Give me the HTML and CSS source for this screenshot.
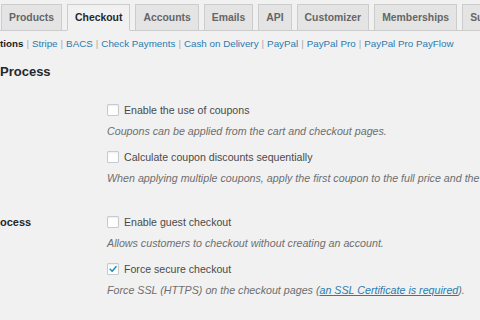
FILE: index.html
```html
<!DOCTYPE html>
<html>
<head>
<meta charset="utf-8">
<link rel="stylesheet" href="styles.css">
</head>
<body>
<div class="wrap">
  <nav class="tabs">
    <a class="tab">Products</a>
    <a class="tab active">Checkout</a>
    <a class="tab">Accounts</a>
    <a class="tab">Emails</a>
    <a class="tab">API</a>
    <a class="tab">Customizer</a>
    <a class="tab">Memberships</a>
    <a class="tab">Subscriptions</a>
  </nav>
  <ul class="subnav">
    <li class="current">tions</li>
    <li><a>Stripe</a></li>
    <li><a>BACS</a></li>
    <li><a>Check Payments</a></li>
    <li><a>Cash on Delivery</a></li>
    <li><a>PayPal</a></li>
    <li><a>PayPal Pro</a></li>
    <li><a>PayPal Pro PayFlow</a></li>
  </ul>
  <h2 class="title">Process</h2>
  <div class="form">
    <div class="row">
      <div class="th"></div>
      <div class="td">
        <label class="opt"><span class="cb"></span>Enable the use of coupons</label>
        <p class="desc">Coupons can be applied from the cart and checkout pages.</p>
        <label class="opt gap"><span class="cb"></span>Calculate coupon discounts sequentially</label>
        <p class="desc">When applying multiple coupons, apply the first coupon to the full price and the second coupon to the discounted price and so on.</p>
      </div>
    </div>
    <div class="row row2">
      <div class="th">ocess</div>
      <div class="td">
        <label class="opt"><span class="cb"></span>Enable guest checkout</label>
        <p class="desc">Allows customers to checkout without creating an account.</p>
        <label class="opt gap"><span class="cb checked"><svg viewBox="0 0 12 12" width="12" height="12"><path d="M2.6 6.2 L5 8.6 L9.6 3.2" fill="none" stroke="#1e8cbe" stroke-width="1.8" stroke-linecap="round" stroke-linejoin="round"/></svg></span>Force secure checkout</label>
        <p class="desc">Force SSL (HTTPS) on the checkout pages (<a class="link">an SSL Certificate is required</a>).</p>
      </div>
    </div>
  </div>
</div>
</body>
</html>
```

FILE: styles.css
```css
html, body {
  margin: 0;
  padding: 0;
  background: #f1f1f1;
  overflow: hidden;
}
body {
  width: 480px;
  height: 320px;
  font-family: "Liberation Sans", Arial, sans-serif;
  color: #444;
}
.wrap {
  width: 480px;
  overflow: hidden;
}
.tabs {
  display: flex;
  gap: 5px;
  padding: 4px 0 0 1px;
  border-bottom: 1px solid #ccc;
  white-space: nowrap;
}
.tab {
  flex: none;
  display: block;
  padding: 5px 7px 5px;
  font-size: 10.4px;
  line-height: 15px;
  font-weight: bold;
  color: #666;
  background: #e4e4e4;
  border: 1px solid #ccc;
  border-bottom: none;
}
.tab.active {
  background: #f1f1f1;
  color: #23282d;
  margin-bottom: -1px;
  border-bottom: 1px solid #f1f1f1;
}
.subnav {
  list-style: none;
  margin: 5px 0 0;
  padding: 0;
  display: flex;
  white-space: nowrap;
  font-size: 9.8px;
  line-height: 16px;
  color: #999;
}
.subnav li + li::before {
  content: "|";
  padding: 0 3px;
  color: #aaa;
}
.subnav .current {
  font-weight: bold;
  color: #1d1d1d;
}
.subnav a {
  color: #2a7bb0;
}
.title {
  margin: 11px 0 0;
  font-size: 13px;
  line-height: 18px;
  color: #23282d;
}
.form {
  margin-top: 19px;
}
.row {
  display: flex;
}
.row2 {
  margin-top: 26px;
}
.th {
  flex: none;
  width: 107px;
  font-size: 11px;
  line-height: 20px;
  font-weight: bold;
  color: #23282d;
}
.td {
  flex: 1;
  min-width: 0;
  white-space: nowrap;
}
.opt {
  display: flex;
  align-items: center;
  height: 20px;
  font-size: 10.6px;
  color: #4a4a4a;
}
.opt.gap {
  margin-top: 8px;
}
.cb {
  flex: none;
  box-sizing: border-box;
  width: 12px;
  height: 12px;
  margin-right: 5px;
  background: #fff;
  border: 1px solid #c7cace;
  border-radius: 1px;
  box-shadow: inset 0 1px 2px rgba(0,0,0,0.08);
  display: flex;
  align-items: center;
  justify-content: center;
}
.cb svg {
  display: block;
}
.desc {
  margin: 3px 0 0;
  font-size: 10.7px;
  line-height: 16px;
  font-style: italic;
  color: #6e6e6e;
}
.link {
  color: #2a7bb0;
  text-decoration: underline;
}
```
